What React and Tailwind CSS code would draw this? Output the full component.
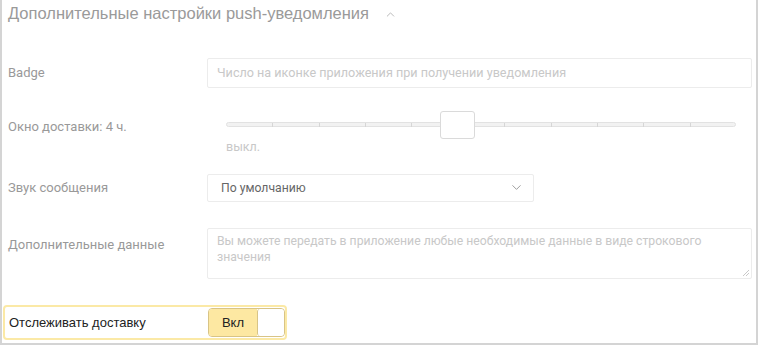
import { ChevronUp, ChevronDown } from 'lucide-react';

const ticks = [1, 2, 3, 4, 5, 6, 7, 8, 9, 10];

function Row({ label, children, className = '', labelClass = '' }) {
  return (
    <div className={`flex items-center ${className}`}>
      <div className={`w-[199px] shrink-0 text-[13px] text-[#999] ${labelClass}`}>{label}</div>
      <div className="flex-1">{children}</div>
    </div>
  );
}

export default function App() {
  return (
    <div className="w-[760px] h-[346px] bg-white font-['Roboto',sans-serif] overflow-hidden">
      <div className="w-[758px] h-[345px] border-l-2 border-r-2 border-b-2 border-[#d4d4d4] pl-[6px] pr-[4px] relative">
        {/* Header */}
        <div className="flex items-center h-[27px] gap-[15px] font-['Liberation_Sans',sans-serif]">
          <span className="text-[16.5px] text-[#9a9a9a] leading-none">Дополнительные настройки push-уведомления</span>
          <ChevronUp size={13} strokeWidth={1.5} className="text-[#aaa] mt-[2px]" />
        </div>

        {/* Badge */}
        <Row label="Badge" className="mt-[31px]">
          <div className="h-[30px] border border-[#ececec] rounded-[2px] flex items-center pl-[9px] text-[12.6px] text-[#c8c8c8]">
            Число на иконке приложения при получении уведомления
          </div>
        </Row>

        {/* Slider */}
        <Row label="Окно доставки: 4 ч." className="mt-[23px] items-start" labelClass="mt-[6px] text-[12px]">
          <div className="pl-[19px] pr-[16px]">
            <div className="relative h-[27px] flex items-center">
              <div className="w-full h-[5px] bg-[#f2f2f2] border border-[#e2e2e2] rounded-full" />
              {ticks.map((t) => (
                <div
                  key={t}
                  className="absolute top-[12px] w-px h-[4px] bg-[#d6d6d6]"
                  style={{ left: `${(t / 11) * 100}%` }}
                />
              ))}
              <div className="absolute left-[214px] top-0 w-[35px] h-[28px] bg-white border border-[#dadada] rounded-[3px]" />
            </div>
            <div className="mt-0 text-[12.5px] text-[#c8c8c8]">выкл.</div>
          </div>
        </Row>

        {/* Sound */}
        <Row label="Звук сообщения" className="mt-[17px]">
          <div className="w-[327px] h-[28px] border border-[#ececec] rounded-[2px] flex items-center justify-between pl-[13px] pr-[9px] text-[12.2px] text-[#666]">
            <span>По умолчанию</span>
            <ChevronDown size={15} strokeWidth={1.3} className="text-[#888]" />
          </div>
        </Row>

        {/* Extra data */}
        <Row label="Дополнительные данные" className="mt-[26px] items-start" labelClass="mt-[7px]">
          <div className="relative h-[51px] border border-[#ececec] rounded-[2px] px-[9px] pt-[4px] text-[12.2px] leading-[16px] text-[#c8c8c8]">
            Вы можете передать в приложение любые необходимые данные в виде строкового значения
            <svg className="absolute right-[1px] bottom-[1px]" width="8" height="8" viewBox="0 0 8 8">
              <path d="M7 1 L1 7 M7 4 L4 7" stroke="#bbb" strokeWidth="0.8" />
            </svg>
          </div>
        </Row>

        {/* Track delivery */}
        <div className="mt-[26px] ml-[-5px] w-[284px] h-[35px] border-2 border-[#fbe9a6] rounded-[4px] flex items-center pl-[4px] font-['Liberation_Sans',sans-serif]">
          <span className="w-[199px] text-[13px] text-[#222]">Отслеживать доставку</span>
          <div className="flex w-[77px] h-[29px] border border-[#d8c486] rounded-[4px] overflow-hidden">
            <div className="w-[48px] bg-[#fde8a2] flex items-center justify-center text-[13px] text-[#222]">Вкл</div>
            <div className="flex-1 bg-white border-l border-[#d8c486] rounded-[3px]" />
          </div>
        </div>
      </div>
    </div>
  );
}
